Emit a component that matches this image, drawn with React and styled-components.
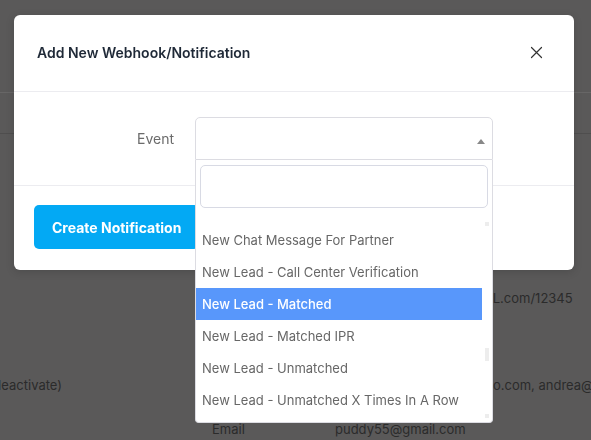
import styled, { createGlobalStyle } from 'styled-components';

const GlobalStyle = createGlobalStyle`
    html, body {
        margin: 0;
        padding: 0;
        height: 440px;
        overflow: hidden;
        background: #5a5959;
        font-family: Inter, "Noto Sans", sans-serif;
    }
`

const Page = styled.div`
    height: 440px;
    overflow: hidden;
    color: #2b2b2b;
    font-size: 13px;
`

const TopBar = styled.div`
    height: 92px;
    border-bottom: 1px solid #676666;
`

const SubBar = styled.div`
    height: 40px;
    border-bottom: 1px solid #4f4e4e;
`

const Details = styled.div`
    padding-top: 154px;
`

const Row = styled.div`
    display: flex;
    height: 20px;
    line-height: 20px;
    margin-top: ${p => p.$gap || 0}px;
    white-space: nowrap;
`

const Label = styled.div`
    flex: none;
    width: ${p => p.$width}px;
    padding-left: ${p => p.$indent || 0}px;
    box-sizing: border-box;
    display: flex;
    justify-content: ${p => p.$end ? 'flex-end' : 'flex-start'};
`

const Value = styled.div`
    flex: none;
    margin-left: ${p => p.$offset || 0}px;
`

const Overlay = styled.div`
    position: fixed;
    inset: 0;
    padding: 15px 0 0 14px;
`

const Modal = styled.div`
    position: relative;
    width: 560px;
    height: 255px;
    background: #fff;
    border-radius: 6px;
    box-shadow: 0 2px 8px rgba(0, 0, 0, 0.15);
    display: flex;
    flex-direction: column;
`

const Header = styled.header`
    height: 77px;
    box-sizing: border-box;
    display: flex;
    align-items: center;
    justify-content: space-between;
    padding: 0 31px 0 23px;
    border-bottom: 1px solid #ececf0;
`

const Title = styled.h2`
    margin: 0;
    margin-top: -1px;
    font-size: 14px;
    font-weight: 600;
    color: #1f2937;
`

const Close = styled.button`
    display: flex;
    padding: 0;
    border: 0;
    background: none;
    color: #333;
    margin-top: -1px;
`

const Body = styled.div`
    height: 94px;
    box-sizing: border-box;
    border-bottom: 1px solid #ececf0;
    display: flex;
    align-items: flex-start;
    padding-top: 25px;
`

const FieldLabel = styled.label`
    width: 181px;
    text-align: right;
    padding-right: 21px;
    box-sizing: border-box;
    font-size: 14px;
    color: #6b6b6b;
    line-height: 42px;
    margin-top: 1px;
`

const SelectWrap = styled.div`
    position: relative;
`

const SelectBox = styled.div`
    width: 298px;
    height: 43px;
    box-sizing: border-box;
    border: 1px solid #dcdce2;
    border-radius: 5px 5px 0 0;
    display: flex;
    align-items: center;
    justify-content: flex-end;
    padding-right: 7px;
`

const Arrow = styled.span`
    width: 0;
    height: 0;
    margin-top: 5px;
    border-left: 4px solid transparent;
    border-right: 4px solid transparent;
    border-bottom: 5px solid #888;
`

const Dropdown = styled.div`
    position: absolute;
    top: 43px;
    left: 0;
    width: 298px;
    height: 263px;
    box-sizing: border-box;
    background: #fff;
    border: 1px solid #dcdce2;
    border-top: 0;
    border-radius: 0 0 4px 4px;
    display: flex;
    flex-direction: column;
    z-index: 2;
`

const SearchBox = styled.input`
    margin: 5px 4px 0 4px;
    height: 43px;
    box-sizing: border-box;
    border: 1px solid #d8dae4;
    border-radius: 5px;
    outline: none;
`

const Results = styled.div`
    flex: 1;
    display: flex;
    padding-top: 16px;
    overflow: hidden;
`

const List = styled.ul`
    flex: 1;
    margin: 0;
    padding: 0;
    list-style: none;
    margin-left: -1px;
`

const Item = styled.li`
    height: 32px;
    line-height: 32px;
    padding-left: 7px;
    font-size: 13px;
    color: ${p => p.$active ? '#fff' : '#676767'};
    background: ${p => p.$active ? '#5897fb' : 'transparent'};
    font-weight: ${p => p.$active ? 500 : 400};
    white-space: nowrap;
`

const Scrollbar = styled.div`
    width: 10px;
    display: flex;
    flex-direction: column;
    align-items: center;
    padding: 0 0 4px;
    margin-top: -2px;
`

const ScrollArrow = styled.span`
    width: 4px;
    height: 4px;
    background: #ededed;
    margin-top: ${p => p.$bottom ? 'auto' : '0'};
`

const Thumb = styled.span`
    width: 4px;
    height: 13px;
    margin-top: 122px;
    background: #ededed;
`

const Footer = styled.div`
    flex: 1;
    padding: 19px 20px;
`

const Button = styled.button`
    height: 44px;
    padding: 0 18px;
    border: 0;
    border-radius: 5px;
    background: #03a9f4;
    color: #fff;
    font-family: inherit;
    font-size: 14px;
    font-weight: 700;
`

const events = [
    'New Chat Message For Partner',
    'New Lead - Call Center Verification',
    'New Lead - Matched',
    'New Lead - Matched IPR',
    'New Lead - Unmatched',
    'New Lead - Unmatched X Times In A Row',
];

function CloseIcon() {
    return (
        <svg width="13" height="13" viewBox="0 0 13 13" fill="none" stroke="currentColor" strokeWidth="1.2" strokeLinecap="round">
            <path d="M1.5 1.5 L11.5 11.5 M11.5 1.5 L1.5 11.5" />
        </svg>
    );
}

export default function App() {
    return (
        <>
            <GlobalStyle />
            <Page>
                <TopBar />
                <SubBar />
                <Details>
                    <Row>
                        <Label $width={335} $indent={212}>Webhook URL</Label>
                        <Value $offset={4}>https://www.WEBSITEURL.com/12345</Value>
                    </Row>
                    <Row $gap={67}>
                        <Label $width={62} $end>Status (activate/deactivate)</Label>
                        <Value $offset={284}>jennifers.support@yahoo.com, andrea@gmail.com</Value>
                    </Row>
                    <Row $gap={24}>
                        <Label $width={335} $indent={212}>Email</Label>
                        <Value>puddy55@gmail.com</Value>
                    </Row>
                </Details>
            </Page>

            <Overlay>
                <Modal>
                    <Header>
                        <Title>Add New Webhook/Notification</Title>
                        <Close aria-label="Close"><CloseIcon /></Close>
                    </Header>
                    <Body>
                        <FieldLabel>Event</FieldLabel>
                        <SelectWrap>
                            <SelectBox><Arrow /></SelectBox>
                            <Dropdown>
                                <SearchBox type="text" />
                                <Results>
                                    <List>
                                        {events.map((ev, i) => (
                                            <Item key={i} $active={ev === 'New Lead - Matched'}>{ev}</Item>
                                        ))}
                                    </List>
                                    <Scrollbar>
                                        <ScrollArrow />
                                        <Thumb />
                                        <ScrollArrow $bottom />
                                    </Scrollbar>
                                </Results>
                            </Dropdown>
                        </SelectWrap>
                    </Body>
                    <Footer>
                        <Button>Create Notification</Button>
                    </Footer>
                </Modal>
            </Overlay>
        </>
    );
}
